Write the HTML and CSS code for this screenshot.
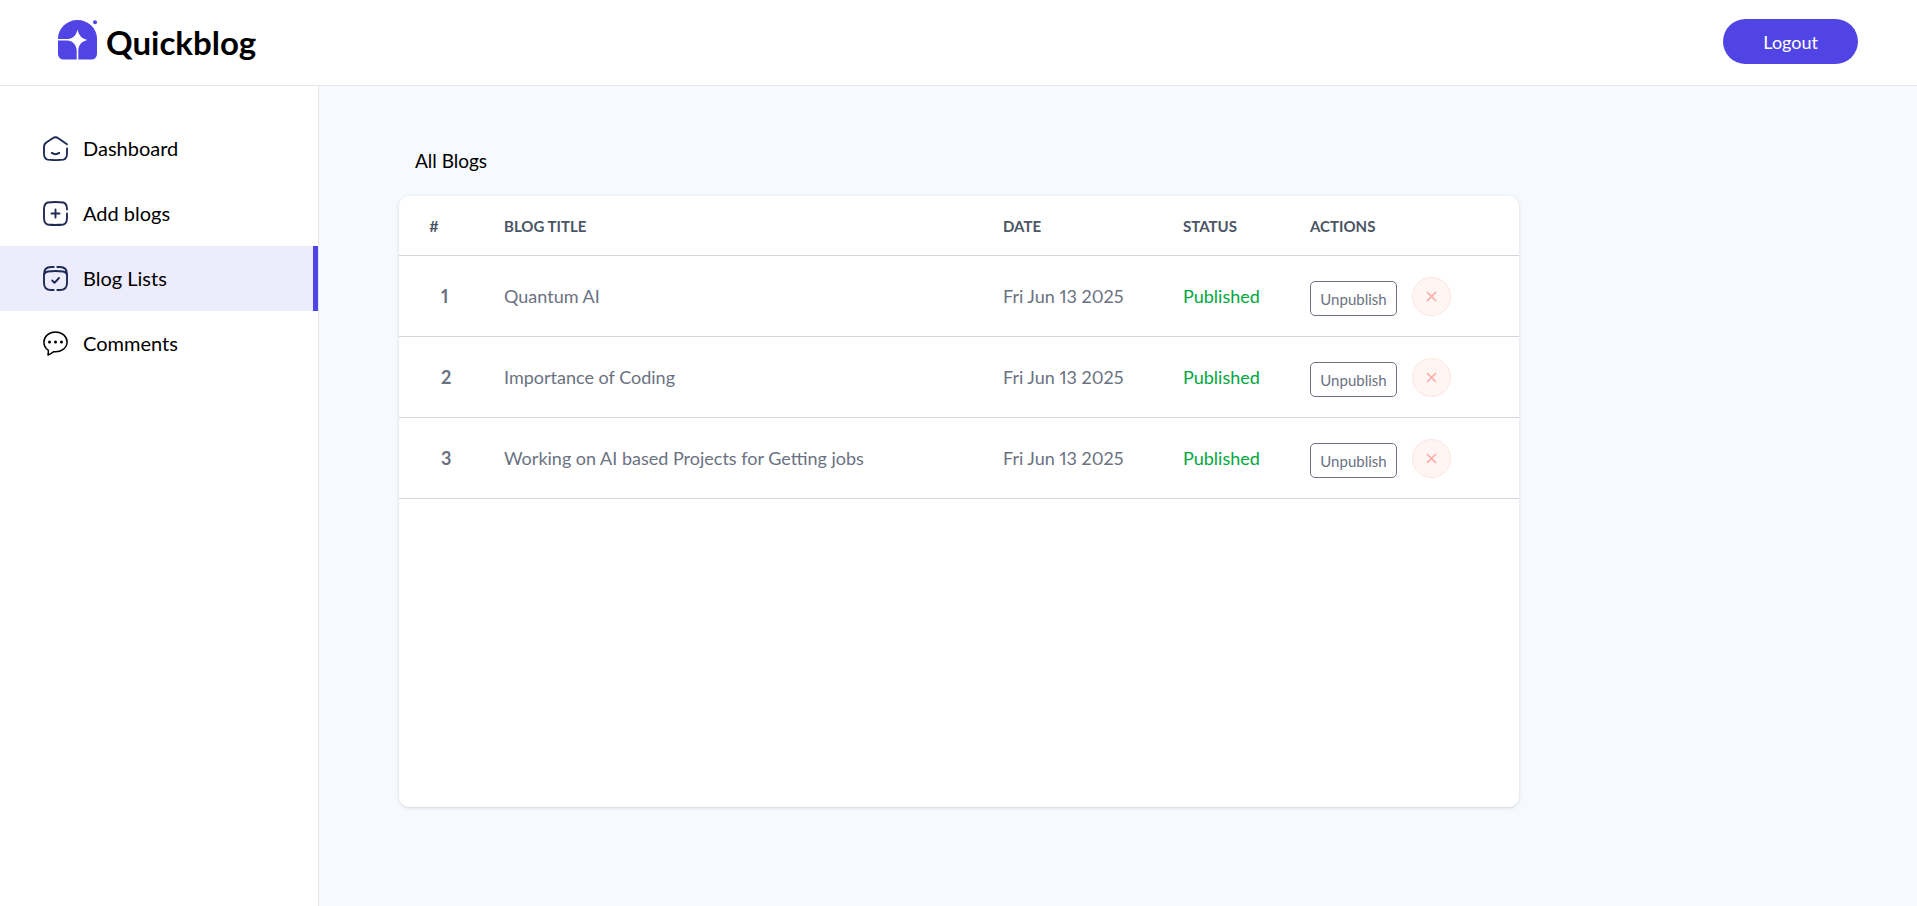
FILE: index.html
```html
<!DOCTYPE html>
<html lang="en">
<head>
<meta charset="utf-8">
<meta name="viewport" content="width=device-width, initial-scale=1">
<title>Quickblog</title>
<link rel="stylesheet" href="styles.css">
</head>
<body>
<header class="topbar">
  <a class="brand" href="#">
    <svg class="brand-mark" viewBox="0 0 40 40" aria-hidden="true">
      <path fill="#5044e5" d="M0 18.5A19.5 18.5 0 0 1 39 18.500V34a5.500 5.500 0 0 1-5.500 5.500H20.300V30.500C20.600 25.200 23.400 21.500 29.300 20C23.400 18.500 20.700 15 19.500 9.500C18.300 15 15.600 18.200 10.500 18.900H0Z"/>
      <path fill="#5044e5" d="M0 20.500H10C15 21.100 18.200 25 18.700 30.500V39.500H5.500A5.500 5.500 0 0 1 0 34Z"/>
      <circle cx="37" cy="2.200" r="2" fill="#5044e5"/>
    </svg>
    <span class="brand-name">Quickblog</span>
  </a>
  <button class="logout" type="button">Logout</button>
</header>
<div class="layout">
  <nav class="sidebar" aria-label="Admin">
    <a class="nav-item" href="#">
      <svg class="nav-icon" viewBox="0 0 25 25" aria-hidden="true"><path d="M24 8.300L15.300 2.200Q12.500 .2 9.700 2.200L3.600 6.300Q1 8 1 11V17.500Q1 22.800 4.600 23.600Q12.500 24.600 20.400 23.600Q24 22.800 24 17.500V12.500M8.800 16.900Q12.500 19.500 16.200 16.900"/></svg>
      <span class="nav-label">Dashboard</span>
    </a>
    <a class="nav-item" href="#">
      <svg class="nav-icon" viewBox="0 0 25 25" aria-hidden="true"><path d="M24 8.500Q24 2.500 20.400 1.500Q12.500 .5 4.600 1.500Q1 2.500 1 8.500V16.500Q1 22.500 4.600 23.500Q12.500 24.500 20.400 23.500Q24 22.500 24 16.500V12.500M12.500 8.500V16.500M8.500 12.500H16.500"/></svg>
      <span class="nav-label">Add blogs</span>
    </a>
    <a class="nav-item nav-item-active" href="#" aria-current="page">
      <svg class="nav-icon" viewBox="0 0 25 25" aria-hidden="true"><path d="M10.700 1H8Q1 1 1 8V17Q1 24 8 24H10.700M14.300 1H17Q24 1 24 8V17Q24 24 17 24H14.300M1.200 8.500Q2 6 5 5.500Q12.500 4.500 20 5.500Q23 6 23.800 8.500M9.200 14.500L11.500 16.800L16 12"/></svg>
      <span class="nav-label">Blog Lists</span>
    </a>
    <a class="nav-item" href="#">
      <svg class="nav-icon nav-icon-dark" viewBox="0 0 25 25" aria-hidden="true"><path d="M12.500 1C6.100 1 .9 5.400 .9 10.900C.9 14.400 2.500 17.300 5.200 19.200C5.700 21 5.200 22.500 4.900 24C7.300 23.300 9 22 10.800 20.700C18 21.600 24.100 16.800 24.100 10.900C24.100 5.400 18.900 1 12.500 1Z"/><g class="dots"><circle cx="6.500" cy="11" r="1.500"/><circle cx="12.500" cy="11" r="1.500"/><circle cx="18.500" cy="11" r="1.500"/></g></svg>
      <span class="nav-label">Comments</span>
    </a>
  </nav>
  <main class="content">
    <h1 class="title">All Blogs</h1>
    <div class="card">
      <table class="blogs">
        <colgroup><col class="c-num"><col class="c-title"><col class="c-date"><col class="c-status"><col class="c-actions"></colgroup>
        <thead>
          <tr><th scope="col">#</th><th scope="col">BLOG TITLE</th><th scope="col">DATE</th><th scope="col">STATUS</th><th scope="col">ACTIONS</th></tr>
        </thead>
        <tbody>
          <tr>
            <th scope="row">1</th><td>Quantum AI</td><td>Fri Jun 13 2025</td><td class="published">Published</td>
            <td><div class="actions"><button class="toggle" type="button">Unpublish</button><button class="remove" type="button" aria-label="Delete blog 1"><svg viewBox="0 0 39 39" aria-hidden="true"><circle cx="19.500" cy="19.500" r="19"/><path d="M15 15L24 24M24 15L15 24"/></svg></button></div></td>
          </tr>
          <tr>
            <th scope="row">2</th><td>Importance of Coding</td><td>Fri Jun 13 2025</td><td class="published">Published</td>
            <td><div class="actions"><button class="toggle" type="button">Unpublish</button><button class="remove" type="button" aria-label="Delete blog 2"><svg viewBox="0 0 39 39" aria-hidden="true"><circle cx="19.500" cy="19.500" r="19"/><path d="M15 15L24 24M24 15L15 24"/></svg></button></div></td>
          </tr>
          <tr>
            <th scope="row">3</th><td>Working on AI based Projects for Getting jobs</td><td>Fri Jun 13 2025</td><td class="published">Published</td>
            <td><div class="actions"><button class="toggle" type="button">Unpublish</button><button class="remove" type="button" aria-label="Delete blog 3"><svg viewBox="0 0 39 39" aria-hidden="true"><circle cx="19.500" cy="19.500" r="19"/><path d="M15 15L24 24M24 15L15 24"/></svg></button></div></td>
          </tr>
        </tbody>
      </table>
    </div>
  </main>
</div>
</body>
</html>
```
FILE: styles.css
```css
* { box-sizing: border-box; }

body {
  margin: 0;
  min-height: 100vh;
  display: flex;
  flex-direction: column;
  font-family: Lato, "Open Sans", sans-serif;
  font-size: 20px;
  color: #000;
  background: #fff;
}

a { color: inherit; text-decoration: none; }
button { font-family: inherit; cursor: pointer; }

.topbar {
  display: flex;
  align-items: center;
  justify-content: space-between;
  padding: 19px 59px 21px 58px;
  border-bottom: 1px solid #e5e7eb;
}
.brand { display: flex; align-items: flex-start; gap: 8px; }
.brand-mark { width: 40px; height: 40px; }
.brand-name { font-size: 33px; line-height: 44px; font-weight: 700; }
.logout {
  padding: 0 40px;
  height: 45px;
  border: 0;
  border-radius: 24px;
  background: #5044e5;
  color: #fff;
  font-size: 18px;
}

.layout { flex: 1; display: flex; }
.sidebar {
  flex: none;
  width: 319px;
  padding-top: 30px;
  border-right: 1px solid #e5e7eb;
}
.nav-item {
  display: flex;
  align-items: center;
  gap: 15px;
  height: 65px;
  padding-left: 43px;
}
.nav-label { padding-bottom: 2px; }
.nav-item-active {
  background: #edecfc;
  border-right: 5px solid #5044e5;
}
.nav-icon {
  width: 25px;
  height: 25px;
  fill: none;
  stroke: #1f2a55;
  stroke-width: 1.900;
  stroke-linecap: round;
  stroke-linejoin: round;
}
.nav-icon-dark { stroke: #000; stroke-width: 1.500; }
.dots { fill: #000; stroke: none; }

.content {
  flex: 1;
  min-width: 0;
  display: flex;
  flex-direction: column;
  padding: 60px 80px 99px;
  background: #f6f9fe;
}
.title {
  margin: 0;
  padding-left: 16px;
  font-size: 19px;
  line-height: 30px;
  font-weight: 400;
}
.card {
  flex: 1;
  max-width: 1120px;
  margin-top: 20px;
  border-radius: 10px;
  background: #fff;
  box-shadow: 0 1px 4px rgba(0, 0, 0, .1), 0 1px 3px -1px rgba(0, 0, 0, .1);
}

.blogs {
  width: 100%;
  table-layout: fixed;
  border-collapse: separate;
  border-spacing: 0;
  color: #6a7282;
  font-size: 18px;
  font-variant-numeric: proportional-nums;
}
.c-num { width: 80px; }
.c-date { width: 180px; }
.c-status { width: 127px; }
.c-actions { width: 234px; }
.blogs th, .blogs td {
  padding: 0 25px;
  text-align: left;
  border-bottom: 1px solid #d1d5dc;
}
.blogs thead th { height: 60px; font-size: 15px; color: #4a5565; }
.blogs thead th:first-child { padding-left: 30px; }
.blogs tbody th, .blogs tbody td { height: 81px; }
.blogs tbody th { padding: 0 0 0 42px; }
.blogs .published { color: #00a63e; }

.actions { display: flex; align-items: center; gap: 15px; }
.toggle {
  width: 87px;
  height: 35px;
  margin-top: 5px;
  padding: 0;
  border: 1px solid #6a7282;
  border-radius: 5px;
  background: none;
  color: #6a7282;
  font-size: 15px;
}
.remove { padding: 0; border: 0; background: none; }
.remove svg { display: block; width: 39px; height: 39px; }
.remove circle { fill: #fff5f3; stroke: #ffe4df; }
.remove path { stroke: #ffa8a8; stroke-width: 1.600; }
```
